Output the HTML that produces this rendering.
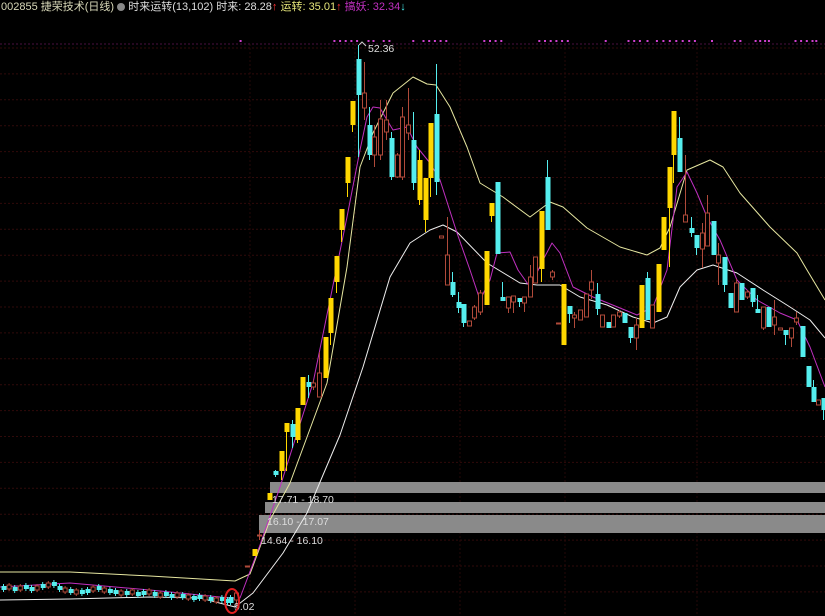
<!DOCTYPE html>
<html><head><meta charset="utf-8">
<style>
html,body{margin:0;padding:0;background:#000;width:825px;height:616px;overflow:hidden}
#t{position:absolute;left:1px;top:0;font:11px "Liberation Sans","Noto Sans CJK SC",sans-serif;color:#d8d8b8;white-space:nowrap;line-height:14px}
svg{position:absolute;left:0;top:0}
</style></head><body>
<svg id="s" width="825" height="616" xmlns="http://www.w3.org/2000/svg"></svg>
<div id="t">002855 捷荣技术(日线) <span style="display:inline-block;width:8px;height:8px;border-radius:50%;background:#888;vertical-align:-1px"></span> <span style="color:#ddd">时来运转(13,102) 时来: 28.28</span><span style="color:#f33">↑</span> <span style="color:#e6e67a">运转: 35.01</span><span style="color:#f33">↑</span> <span style="color:#c030c0">搞妖: 32.34</span><span style="color:#4ee">↓</span></div>
<script>
var s=document.getElementById('s'),h='';
for(var y=48;y<616;y+=25.9){h+='<line x1="0" x2="825" y1="'+y.toFixed(1)+'" y2="'+y.toFixed(1)+'" stroke="#300a0a" stroke-dasharray="2,2"/>';}
[250,355,460,565,697].forEach(function(x){h+='<line x1="'+x+'" x2="'+x+'" y1="44" y2="616" stroke="#240808" stroke-dasharray="2,2"/>';});
h+='<line x1="0" x2="825" y1="44" y2="44" stroke="#4a1040" stroke-dasharray="2,2"/>';
var dz=[28,275,290,305,320,335,365,378,405,420,483,510,525,540,555,570,670,685,700,715,815,830,845,860,875,890,990,1050,1065,1080,1100,1125,1142,1159,1176,1193,1210,1225,1270,1330,1345,1385,1397,1410,1420,1490,1505,1520,1535,1545];
dz.forEach(function(z){h+='<rect x="'+(230+z*0.3795-1).toFixed(1)+'" y="40" width="2" height="2" fill="#d040d0"/>';});
h+='<rect x="270" y="482" width="555" height="11" fill="#8a8a8a"/>';
h+='<rect x="265" y="502" width="560" height="11" fill="#8a8a8a"/>';
h+='<rect x="259" y="515" width="566" height="18" fill="#8a8a8a"/>';
function pl(p,c){h+='<polyline fill="none" stroke="'+c+'" stroke-width="1" stroke-linejoin="round" points="'+p+'"/>';}
pl('0,572 70,572 150,576 235,581 250,574 270,520 290,483 327,383 347,267 360,167 373,133 393,93 413,77 427,84 436,85 450,107 467,147 480,183 503,197 530,217 550,202 563,207 587,228 620,247 647,255 660,248 670,227 687,170 710,160 723,167 740,193 770,227 797,253 807,270 825,300','#e6e6a0');
pl('0,600 70,599 150,597 200,598 235,607 253,593 283,553 307,513 323,475 340,435 363,367 390,277 410,243 430,230 443,225 457,232 487,263 520,283 537,285 560,285 580,297 607,305 633,317 653,323 667,317 680,287 697,270 713,265 737,273 763,290 790,307 810,320 825,338','#eeeeee');
pl('0,587 70,583 150,590 230,598 240,598 260,545 280,487 313,383 347,217 360,150 367,117 373,107 380,108 387,120 393,130 407,127 417,147 430,163 440,180 457,233 470,270 480,300 490,280 497,253 510,252 518,270 530,287 543,260 552,243 560,253 573,287 593,297 620,308 637,315 653,307 667,270 677,187 687,172 697,193 707,217 720,240 737,280 757,300 780,313 797,320 810,347 825,387','#c030c0');
var C=[[275,471,475,470,477,'c'],[281,451,471,451,480,'y'],[286,423,432,423,471,'y'],[292,424,437,420,448,'c'],[297,408,440,408,443,'y'],[302,377,405,377,405,'y'],[308,382,387,375,398,'c'],[313,383,387,380,390,'r'],[319,373,397,352,397,'r'],[325,337,378,337,378,'y'],[330,298,333,298,345,'y'],[336,256,282,256,293,'y'],[341,209,230,209,242,'y'],[347,157,183,157,197,'y'],[352,101,125,101,132,'y'],[358,59,95,45,157,'c'],[364,93,108,62,120,'r'],[369,125,155,107,160,'c'],[374,137,155,125,167,'r'],[380,119,155,100,160,'r'],[386,120,132,100,140,'r'],[391,138,177,132,180,'c'],[397,155,177,153,178,'r'],[402,117,177,107,180,'r'],[408,125,133,88,140,'r'],[413,140,183,112,190,'c'],[419,160,200,150,205,'y'],[425,178,220,178,232,'y'],[430,123,178,123,197,'y'],[436,114,182,64,195,'c'],[441,236,238,236,238,'r'],[447,255,285,217,285,'r'],[452,282,295,272,297,'c'],[458,302,308,292,313,'c'],[463,304,323,304,327,'c'],[469,321,326,321,326,'r'],[474,307,318,305,320,'r'],[480,293,312,290,315,'r'],[486,251,305,251,305,'y'],[491,203,216,203,222,'y'],[497,182,254,182,254,'c'],[502,297,301,282,301,'c'],[508,297,308,297,313,'r'],[513,296,302,296,313,'r'],[519,298,302,298,307,'c'],[524,297,303,297,312,'r'],[530,277,297,265,297,'r'],[535,257,283,257,280,'r'],[541,211,269,211,282,'y'],[547,177,230,160,230,'c'],[552,272,277,270,280,'r'],[558,323,324,323,324,'r'],[563,284,345,284,345,'y'],[569,306,314,306,323,'c'],[574,315,318,312,328,'r'],[580,310,320,310,320,'r'],[586,294,317,294,317,'r'],[591,282,290,270,299,'r'],[597,294,309,283,315,'c'],[602,315,327,315,327,'r'],[608,322,328,322,328,'c'],[613,315,327,315,327,'r'],[619,312,316,310,318,'r'],[624,313,323,313,323,'c'],[630,327,338,327,343,'c'],[636,325,338,318,350,'r'],[641,285,328,285,328,'y'],[647,278,320,272,320,'c'],[652,305,328,305,328,'r'],[658,264,312,264,312,'y'],[663,217,250,217,250,'y'],[669,167,208,167,267,'y'],[673,111,155,111,183,'y'],[679,138,172,117,172,'c'],[685,215,222,155,222,'r'],[691,228,233,217,237,'c'],[696,235,248,235,255,'c'],[702,233,249,223,268,'r'],[707,213,246,195,246,'r'],[713,221,255,221,255,'c'],[718,255,263,243,285,'r'],[724,257,285,257,292,'c'],[730,293,308,293,308,'c'],[736,283,312,279,312,'r'],[741,283,300,283,300,'c'],[747,292,297,290,299,'r'],[752,288,302,288,307,'c'],[757,309,313,295,313,'c'],[763,307,328,307,330,'r'],[768,307,327,307,327,'c'],[774,317,325,300,335,'r'],[780,328,330,328,330,'r'],[785,330,335,330,345,'c'],[791,328,338,328,347,'r'],[796,318,322,312,325,'r'],[802,326,357,326,357,'c'],[808,366,387,366,387,'c'],[813,387,402,380,402,'c'],[818,400,405,400,405,'r'],[823,398,410,398,420,'c'],
[230,597,603,595,605,'c'],[236,593,600,592,605,'r'],[247,566,567,566,567,'r'],[254,549,556,549,556,'y'],[269,493,500,493,500,'y'],[259,535,536,530,540,'r']];
var ly=[588,587,589,588,587,589,588,586,585,584,588,590,591,592,592,591,589,588,590,591,592,593,593,592,594,593,592,594,595,594,596,595,596,597,598,597,598,599,600,599,601];
for(var i=0;i<ly.length;i++){var x=3+i*5.6,t=['c','r','c','r','c'][i%5],yy=ly[i];C.push([x,yy-2,yy+2,yy-4,yy+4,t]);}
C.forEach(function(c){var x=c[0],t=c[5],col=t=='y'?'#ffd700':t=='c'?'#55eeee':'#b04a3a';
h+='<line x1="'+(x+.5)+'" x2="'+(x+.5)+'" y1="'+c[3]+'" y2="'+c[4]+'" stroke="'+col+'"/>';
var bh=Math.max(c[2]-c[1],1);
if(t=='r')h+='<rect x="'+(x-1.5)+'" y="'+c[1]+'" width="4" height="'+bh+'" fill="#000" stroke="'+col+'"/>';
else h+='<rect x="'+(x-1.5)+'" y="'+c[1]+'" width="5" height="'+bh+'" fill="'+col+'"/>';});
var f='font-family="Liberation Sans,sans-serif" font-size="10.5"';
h+='<path d="M359,45 L362,42 L366,46" fill="none" stroke="#ccc"/>';
h+='<text x="368" y="52" '+f+' fill="#ddd">52.36</text>';
h+='<text x="272" y="503" '+f+' fill="#ddd">17.71 - 18.70</text>';
h+='<text x="267" y="525" '+f+' fill="#ddd">16.10 - 17.07</text>';
h+='<text x="261" y="544" '+f+' fill="#ddd">14.64 - 16.10</text>';
h+='<text x="234" y="610" '+f+' fill="#ddd">9.02</text>';
h+='<ellipse cx="232" cy="601" rx="7" ry="12" fill="none" stroke="#e02020" stroke-width="2"/>';
s.innerHTML=h;
</script>
</body></html>
